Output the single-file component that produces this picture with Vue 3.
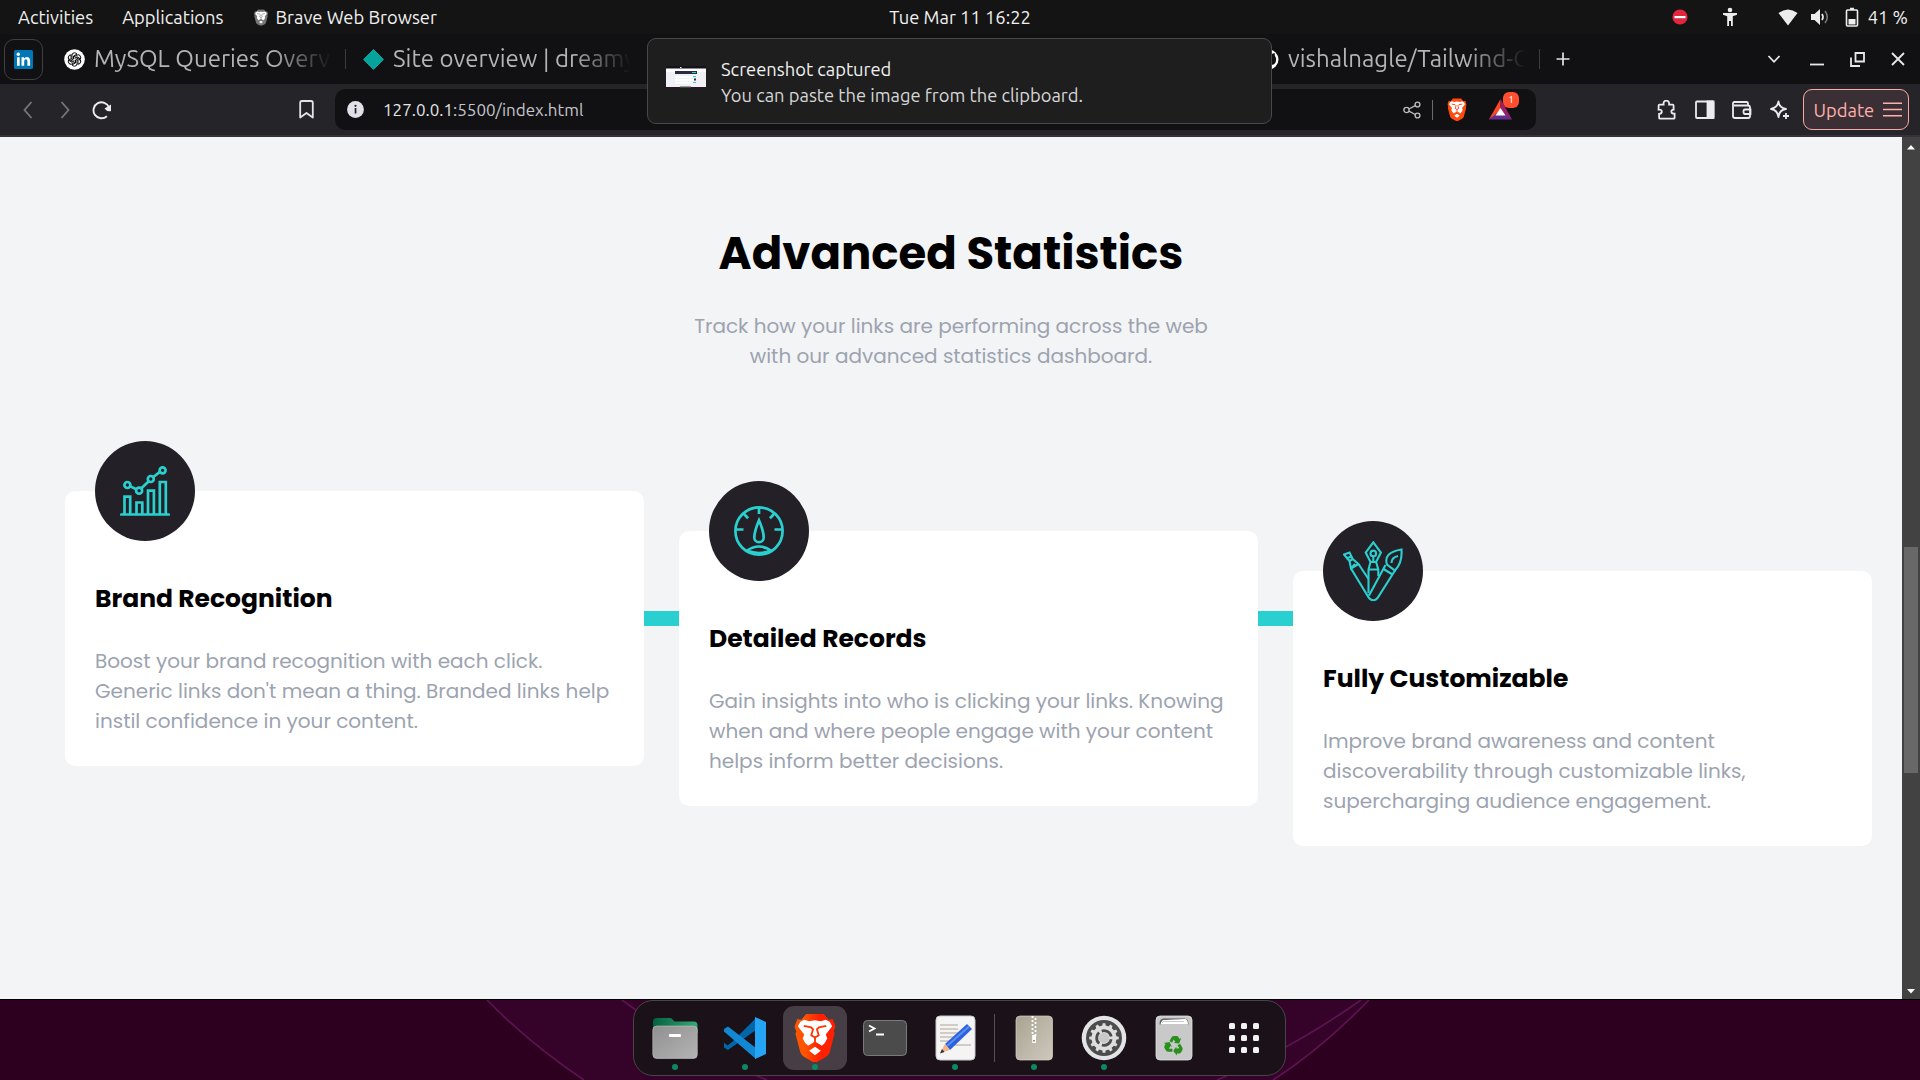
<script setup>
const cards = [
  {
    icon: 'chart',
    title: 'Brand Recognition',
    lines: [
      'Boost your brand recognition with each click.',
      "Generic links don't mean a thing. Branded links help",
      'instil confidence in your content.',
    ],
  },
  {
    icon: 'gauge',
    title: 'Detailed Records',
    lines: [
      'Gain insights into who is clicking your links. Knowing',
      'when and where people engage with your content',
      'helps inform better decisions.',
    ],
  },
  {
    icon: 'tools',
    title: 'Fully Customizable',
    lines: [
      'Improve brand awareness and content',
      'discoverability through customizable links,',
      'supercharging audience engagement.',
    ],
  },
]

const teeth = Array.from({ length: 12 }, (_, i) => i * 30)
</script>

<template>
  <div class="desktop">
    <svg width="0" height="0" class="defs">
      <defs>
        <linearGradient id="braveFill" x1="0" x2="1">
          <stop offset="0.25" stop-color="#ff5500" />
          <stop offset="0.6" stop-color="#ff2000" />
        </linearGradient>
        <symbol id="lion" viewBox="0 0 42 50">
          <path d="M12 1h18l5 6 4-1 3 8-2 5 1 2-5 19q-1 3-4 5l-9 5q-2 1-4 0l-9-5q-3-2-4-5L1 21l1-2-2-5 3-8 4 1z" />
          <path fill="#fff" d="M6 9l4-2 5 1.500 6-1 6 1 5-1.500 4 2 2.500 4.500L32 22l1.500 4-2.500 4.500-3 3-7-4.500-7 4.500-3-3L8.500 26l1.500-4-6.500-8.500zM21 34.500l6 4-6 4.500-6-4.500z" />
          <path fill="none" stroke="var(--cut, #ff3407)" stroke-width="1.900" d="M9.500 13.200l7.500 1.500 2 2-1.800 6 3.800 2.300 3.800-2.300-1.800-6 2-2 7.500-1.500M21 25v4.500" />
        </symbol>
      </defs>
    </svg>

    <header class="topbar">
      <div class="top-left">
        <span>Activities</span>
        <span class="applications">Applications</span>
        <svg class="mini-lion" width="14" height="17" viewBox="0 0 42 50"><use href="#lion" fill="#77777a" /></svg>
        <span>Brave Web Browser</span>
      </div>
      <div class="clock"><span>Tue Mar 11  16:22</span></div>
      <div class="top-right">
        <svg width="16" height="16" viewBox="0 0 16 16"><circle cx="8" cy="8" r="7.6" fill="#e2263d" /><rect x="2.5" y="7" width="11" height="2.2" fill="#fff" /></svg>
        <svg class="person" width="16" height="20" viewBox="0 0 16 20" fill="#ededed"><circle cx="8" cy="3" r="2.3" /><path d="M1 6h14v1.8l-4.2 1.4V19H9v-5H7v5H5.200V9.200L1 7.800z" /></svg>
        <svg class="wifi" width="20" height="17" viewBox="0 0 20 17" fill="#ededed"><path d="M.5 4Q10-3 19.500 4L10 16.500z" /></svg>
        <svg class="volume" width="20" height="18" viewBox="0 0 20 18"><path fill="#ededed" d="M1 6h3.500L10 1v16l-5.500-5H1z" /><path d="M12 6q2 3 0 6" fill="none" stroke="#ededed" stroke-width="1.700" /><path d="M15 3q4.500 6 0 12" fill="none" stroke="#777" stroke-width="1.600" /></svg>
        <svg class="battery" width="14" height="20" viewBox="0 0 14 20"><path d="M5 1.500h4M2.500 3h9q1 0 1 1v14q0 1-1 1h-9q-1 0-1-1V4q0-1 1-1z" fill="none" stroke="#ededed" stroke-width="1.600" /><rect x="3.500" y="12" width="7" height="5.500" fill="#ededed" /></svg>
        <span>41 %</span>
      </div>
    </header>

    <div class="tabs">
      <div class="pinned">
        <svg width="19" height="19" viewBox="0 0 19 19"><rect width="19" height="19" rx="1.500" fill="#0077b5" /><g fill="#fff"><circle cx="4.300" cy="4.300" r="1.700" /><path d="M3 7.200h2.700v8.500H3zM7.500 7.200h2.500v1.200q1-1.500 2.900-1.500 3.200 0 3.200 3.800v5h-2.700v-4.500q0-2-1.500-2-1.700 0-1.700 2v4.500H7.500z" /></g></svg>
      </div>
      <div class="tab first">
        <svg width="21" height="21" viewBox="0 0 21 21"><circle cx="10.500" cy="10.500" r="10.300" fill="#fff" /><g fill="none" stroke="#111" stroke-width="1"><path v-for="r in [0, 60, 120, 180, 240, 300]" :key="r" :transform="`rotate(${r} 10.500 10.500)`" d="M8 10V6.200q0-2.400 2.500-2.400 1.600 0 2.500 1.300L9.500 7v3" /></g></svg>
        <span class="tab-title">MySQL Queries Overv</span>
      </div>
      <i class="divider"></i>
      <div class="tab second">
        <svg width="21" height="21" viewBox="0 0 21 21"><path d="M10.500.5 20.500 10.500 10.500 20.500.5 10.500z" fill="#05a39c" stroke="#05a39c" stroke-linejoin="round" /></svg>
        <span class="tab-title">Site overview | dreamy</span>
      </div>
      <div class="tab third">
        <svg width="21" height="21" viewBox="0 0 21 21"><circle cx="10.500" cy="10.500" r="10" fill="#fff" /><path d="M8 20v-4q-5-1-4.500-6 0-2 1.200-3.200L4.600 4l3 1q3-.7 6 0l3-1 .3 3q1.100 1 1.100 3 .5 5-4.500 6v4z" fill="#111" /></svg>
        <span class="tab-title">vishalnagle/Tailwind-C</span>
      </div>
      <i class="divider"></i>
      <svg class="plus" width="14" height="14" viewBox="0 0 14 14" stroke="#e4e4e6" stroke-width="1.700"><path d="M7 .5v13M.5 7h13" /></svg>
      <div class="window-buttons">
        <svg width="14" height="14" viewBox="0 0 14 14"><path d="M1.500 4 7 9.800 12.500 4" /></svg>
        <svg width="14" height="14" viewBox="0 0 14 14"><path d="M0 12.500h14" /></svg>
        <svg width="15" height="15" viewBox="0 0 15 15"><path d="M5.500 1h8.500v8.500H5.500zM1 5.500V14h9" /></svg>
        <svg width="14" height="14" viewBox="0 0 14 14"><path d="M1 1 13 13M13 1 1 13" /></svg>
      </div>
    </div>

    <div class="toolbar">
      <svg class="back" width="10" height="18" viewBox="0 0 10 18"><path d="M8.500 1 1.500 9l7 8" /></svg>
      <svg class="forward" width="10" height="18" viewBox="0 0 10 18"><path d="M1.500 1l7 8-7 8" /></svg>
      <svg class="reload" width="20" height="20" viewBox="0 0 20 20"><path d="M14.900 16.200A8 8 0 1 1 17 7.500" fill="none" stroke="#ececee" stroke-width="1.900" /><path d="M12.500 8.500 19 4.500v6.500q-4 1-6.500-2.500z" fill="#ececee" /></svg>
      <svg class="bookmark" width="15" height="19" viewBox="0 0 15 19"><path d="M3 1h9q1.800 0 1.800 1.800V17.500L7.500 13l-6.300 4.500V2.800Q1.200 1 3 1z" fill="none" stroke="#e4e4e6" stroke-width="1.800" stroke-linejoin="round" /></svg>
      <div class="address">
        <svg width="17" height="17" viewBox="0 0 17 17"><circle cx="8.500" cy="8.500" r="8.400" fill="#e2e0e8" /><circle cx="8.500" cy="4.800" r="1.100" fill="#222" /><rect x="7.700" y="7" width="1.700" height="5.500" fill="#222" /></svg>
        <span class="url"><b>127.0.0.1</b>:5500/index.html</span>
        <svg class="share" width="18" height="18" viewBox="0 0 18 18" fill="none" stroke="#b9b9bf" stroke-width="1.400"><circle cx="3.500" cy="9" r="2.600" /><circle cx="14.500" cy="3.500" r="2.400" /><circle cx="14.500" cy="14.500" r="2.400" /><path d="M6 8 12.200 4.700M6 10.200l6.200 3.300" /></svg>
        <i class="address-divider"></i>
        <svg class="shield" width="20" height="23" viewBox="0 0 42 50"><use href="#lion" fill="#ff4a0c" /></svg>
        <div class="rewards">
          <svg width="23" height="21" viewBox="0 0 23 21"><path d="M11.500 0 0 20.500l11.500-7z" fill="#ff4724" /><path d="M11.500 0 23 20.500 11.500 13z" fill="#9e1f63" /><path d="M0 20.500h23L11.500 11z" fill="#662d91" /><path d="M11.500 9 6.500 16.500h10z" fill="#fff" /></svg>
          <span class="badge">1</span>
        </div>
      </div>
      <div class="actions">
        <svg width="20" height="20" viewBox="0 0 20 20"><path d="M3 5h4q-.5-4 2.700-4T12.500 5H16q1 0 1 1v4q-2.500.2-2.200 2.200T18 14v4q0 1-1 1H3.500q-1 0-1-1v-3.800q2.700 0 2.700-2.300T2 10V6q0-1 1-1z" transform="translate(-.4 -.3)" /></svg>
        <svg width="20" height="20" viewBox="0 0 20 20"><rect x="1" y="1.500" width="17.500" height="16.500" rx="1" /><path d="M12.500 1.500h6V18h-6z" fill="#ececee" /></svg>
        <svg width="20" height="20" viewBox="0 0 20 20"><path d="M16 5.500V3.500q0-1.500-1.500-1.500h-12Q1 2 1 3.500V16q0 2 2 2h13q2 0 2-2V7.500q0-2-2-2H2M18.500 9.500H13q-1.500 0-1.500 2.200T13 14h5.500z" /></svg>
        <svg width="20" height="20" viewBox="0 0 20 20"><path d="M8.500 1.500q.5 6 7.500 7.500-7 1-7.500 8-1-7-7.500-8 6.500-1.500 7.500-7.500z" stroke-linejoin="round" /><path d="M16 13v6M13 16h6" /></svg>
      </div>
      <div class="update">
        <span>Update</span>
        <svg width="19" height="15" viewBox="0 0 19 15"><path d="M0 1.200h19M0 7.500h19M0 13.800h19" stroke="#ffb0ac" stroke-width="1.500" /></svg>
      </div>
    </div>

    <div class="viewport">
      <main class="page">
        <h1>Advanced Statistics</h1>
        <p class="lead">
          <span>Track how your links are performing across the web</span>
          <span>with our advanced statistics dashboard.</span>
        </p>
        <section class="cards">
          <div class="connector"></div>
          <article v-for="card in cards" :key="card.icon" class="card" :class="card.icon">
            <div class="emblem">
              <svg v-if="card.icon === 'chart'" width="50" height="50" viewBox="0 0 50 50">
                <path d="M1.300 48.500h47.400M4.500 48V30.700h5.700V48M16.500 48V36.500h5.800V48M28 48V24.700h5.900V48M39.800 48V16h6v32" stroke-linecap="round" />
                <path d="M10.300 20.400 16.300 23.300M21.400 22.300 28.500 15.500M33.300 11 40 5.900" />
                <circle cx="7.400" cy="19" r="3" /><circle cx="19.100" cy="24.700" r="3" /><circle cx="30.800" cy="13" r="3" /><circle cx="42.600" cy="4.300" r="3" />
              </svg>
              <svg v-else-if="card.icon === 'gauge'" width="50" height="50" viewBox="0 0 50 50">
                <circle cx="25" cy="25" r="23.600" />
                <path d="M25 1v7M1 23.500h8.500M40.500 23.500H49M9.500 7.500l4.600 4.800M40.500 7.500l-4.600 4.800M13 44.500q12-8 24 0-12 5-24 0z" />
                <path d="M25 14.200q4.700 11 4.700 17.300a4.700 4.700 0 0 1-9.400 0Q20.300 25.500 25 14.200z" />
              </svg>
              <svg v-else class="wide" width="60" height="60" viewBox="0 0 60 60">
                <path d="M27.500 21 22.700 11.500 30.300 1.300 37.900 11.500 33.100 21zM30.300 15.500V21M27.500 21 25.500 28.500V52M33.100 21 35.300 28.500V35M25.500 28.500h9.800" />
                <circle cx="30.300" cy="12.400" r="2.800" />
                <path d="M1 13.500 6.500 11.500 9.700 18 15.500 23 8 27.500 6.500 20zM3 17.500 8.500 15.500M6.500 20l3.500-2M8 27.500 26 57q4.500 4.500 8.500 0L52 29.500M15.500 23 25.500 38M8 27.500l4-4.500M42.500 24 26 54.500M40.500 28l9 5.500" />
                <path d="M44 23.500Q40 11.500 58.500 8.500 59.500 22 52 29.500zM48.500 22q0-5.500 6.500-7" />
              </svg>
            </div>
            <h2>{{ card.title }}</h2>
            <p><span v-for="line in card.lines" :key="line">{{ line }}</span></p>
          </article>
        </section>
      </main>
      <div class="scrollbar">
        <svg width="8" height="5" viewBox="0 0 8 5"><path d="M4 0 8 4.500H0z" fill="#fff" /></svg>
        <div class="thumb"></div>
        <svg class="down" width="8" height="5" viewBox="0 0 8 5"><path d="M4 4.500 8 0H0z" fill="#fff" /></svg>
      </div>
    </div>

    <footer class="wallpaper">
      <svg class="lines" width="1920" height="80" viewBox="0 0 1920 80">
        <path d="M487 0Q530 44 584 80H1273Q1320 50 1369 0z" fill="#35022a" />
        <path d="M487 0Q530 44 584 80M622 0Q690 50 767 80M1217 80Q1290 50 1361 0M1273 80Q1320 50 1369 0" fill="none" stroke="#5c1450" stroke-width="1.700" />
      </svg>
      <nav class="dock">
        <div class="app"><svg width="46" height="46" viewBox="0 0 46 46">
          <defs><linearGradient id="folder" x1="0" y1="0" x2="1" y2="1"><stop stop-color="#909090" /><stop offset="1" stop-color="#b4b4b4" /></linearGradient><linearGradient id="back"><stop stop-color="#05603e" /><stop offset="1" stop-color="#35a878" /></linearGradient></defs>
          <path d="M1 14V7q0-4 4-4h13q2 0 3 2l1.500 1.500H42q3.500 0 3.500 3.500v8H1z" fill="url(#back)" /><rect x=".8" y="11" width="44.500" height="32.500" rx="4" fill="url(#folder)" stroke="#c4c4c4" stroke-width=".6" /><rect x="17" y="19" width="12" height="3" rx=".8" fill="#fff" /></svg><i></i></div>
        <div class="app"><svg width="44" height="44" viewBox="0 0 44 44">
          <path d="M33 1 9 25 4.500 28.500 1 25.500v5L5 33 33 13z" fill="#0065a9" transform="translate(0 1)" /><path d="M1 13 5 10.500 33 32v11L1 15.500z" fill="#1287d2" /><path d="M32 1 43 6v32l-11 5z" fill="#25a5f4" /></svg><i></i></div>
        <div class="app active"><svg width="42" height="49" viewBox="0 0 42 50"><use href="#lion" fill="url(#braveFill)" /></svg><i></i></div>
        <div class="app"><svg width="46" height="46" viewBox="0 0 46 46"><rect x="1.500" y="5.500" width="43" height="35" rx="4" fill="#4b4b4b" stroke="#7a7a7a" /><path d="M7 10.500l5.500 3L7 16.500M14 19.500h8" fill="none" stroke="#fff" stroke-width="1.800" /></svg></div>
        <div class="app"><svg width="46" height="46" viewBox="0 0 46 46"><rect x="4" y="1" width="39" height="44" rx="4" fill="#f4f4f4" stroke="#c9c9c9" /><path d="M8 10h18M8 14h18M8 18h18M8 22h15M8 26h12M15 30h24" stroke="#c5c0b4" stroke-width="1.600" /><path d="M13 29 35 9l5 5-22 21z" fill="#2d62dc" /><path d="M15 31 37 11.500" stroke="#5b8df5" stroke-width="2" /><path d="M13 29l5 6-10 3z" fill="#f4b483" /><path d="M10 34l2.500 3L8 38.500z" fill="#333" /></svg><i></i></div>
        <b class="separator"></b>
        <div class="app"><svg width="46" height="46" viewBox="0 0 46 46"><defs><linearGradient id="archive" x2="1" y2="1"><stop stop-color="#aaa392" /><stop offset="1" stop-color="#cdc9bd" /></linearGradient></defs><rect x="5" y="1" width="36.500" height="44" rx="4" fill="url(#archive)" stroke="#d8d4c8" stroke-width=".7" /><path d="M21.500 1v20M24.500 3v20" stroke="#fff" stroke-width="1.800" stroke-dasharray="2 2" /><path d="M21.200 20h3.800v8h-3.800z" fill="#fff" /><path d="M22.200 25h1.600v1.500h-1.600z" fill="#777" /></svg><i></i></div>
        <div class="app"><svg width="46" height="46" viewBox="0 0 46 46"><circle cx="23" cy="23" r="22.300" fill="#e4e4e4" /><circle cx="23" cy="23" r="18" fill="#4c4c4c" /><g fill="#dedede"><circle cx="23" cy="23" r="12.500" /><path v-for="t in teeth" :key="t" d="M22 11 22.300 9h1.400l.3 2z" stroke="#dedede" stroke-width="1.500" :transform="`rotate(${t} 23 23)`" /></g><circle cx="23" cy="23" r="7.300" fill="none" stroke="#4c4c4c" stroke-width="2.800" stroke-dasharray="12.300 3" transform="rotate(10 23 23)" /><circle cx="23" cy="23" r="5" fill="#c8c8c8" /></svg><i></i></div>
        <div class="app"><svg width="46" height="46" viewBox="0 0 46 46"><rect x="5" y="1" width="36" height="44" rx="4" fill="#c9c9c9" stroke="#e2e2e2" stroke-width=".8" /><path d="M8.500 9.500q0-6 4-6h21q4 0 4 6z" fill="#606060" /><path d="M9.500 9.500q1-5 4-4.500l21-1q2.500 1 2.500 5.500z" fill="#fff" /><path d="M11 8q1-2 4-1.500h18" fill="none" stroke="#bbb" stroke-width=".8" />
          <g v-for="r in [0, 120, 240]" :key="r" :transform="`rotate(${r} 23 30.500)`" fill="#2a8f1c"><path d="M18.500 26 20.800 22q.7-1 2.200-1h2.500q1.200 0 2 1.200l1 1.700 1.700-1-2 5.500-5.500-.4 1.600-1-1.600-2.600-1.700 3.300z" /></g></svg></div>
        <div class="app"><svg width="46" height="46" viewBox="0 0 46 46" fill="#f2f2f2"><g v-for="y in [8, 20, 32]" :key="y"><rect v-for="x in [8, 20, 32]" :key="x" :x="x" :y="y" width="6" height="6" rx="1.500" /></g></svg></div>
      </nav>
    </footer>

    <aside class="notification">
      <svg width="40" height="22" viewBox="0 0 40 22"><rect width="40" height="22" fill="#fff" /><rect width="40" height="2.500" fill="#16121c" /><rect x="14" y="1" width="1.500" height="1" fill="#fff" /><rect y="6" width="40" height="15" fill="#f0f1f4" /><rect x="9" y="5" width="22" height="3" fill="#2c2b46" /><rect x="26" y="6" width="4" height="1" fill="#2acfcf" /><path d="M9 10h18v2H9zM9 13h18v2H9zM9 16h18v1.500H9z" fill="#fff" /><path d="M27 10h3v1h-3zM27 16h3v1h-3z" fill="#2acfcf" /><rect x="28" y="12.500" width="2" height="2" fill="#2c2b46" /><rect y="21" width="40" height="1" fill="#30102c" /><rect x="14" y="20.500" width="11" height="1.500" fill="#444" /></svg>
      <div>
        <p>Screenshot captured</p>
        <p class="muted">You can paste the image from the clipboard.</p>
      </div>
    </aside>
  </div>
</template>

<style>
body { background: #111113; overflow: hidden; }
</style>

<style scoped>
* { box-sizing: border-box; }
svg { display: block; flex: none; }
.desktop { position: relative; width: 1920px; height: 1080px; overflow: hidden; display: flex; flex-direction: column; font-family: Ubuntu, "Noto Sans", sans-serif; font-size: 18.330px; color: #f0f0f0; background: #111113; }
.desktop span { white-space: pre; display: inline-block; }
.defs { position: absolute; }
h1, h2, p { margin: 0; }

.topbar { height: 34px; flex: none; display: grid; grid-template-columns: 1fr auto 1fr; align-items: center; background: #141414; line-height: 34px; }
.top-left, .top-right, .clock { display: flex; align-items: center; height: 34px; }
.top-left { padding-left: 18px; }
.applications { margin-left: 29px; }
.mini-lion { --cut: #77777a; margin: 0 7px 0 31px; }
.top-right { justify-content: flex-end; padding-right: 12px; }
.person { margin-left: 34px; }
.wifi { margin-left: 40px; }
.volume { margin-left: 12px; }
.battery { margin: 0 9px 0 15px; }

.tabs { height: 50px; flex: none; display: flex; align-items: center; background: #111113; }
.pinned { width: 39px; height: 41px; margin-left: 4px; border: 1px solid #404044; border-radius: 10px; display: flex; align-items: center; justify-content: center; }
.tab { display: flex; align-items: center; font-size: 24px; line-height: 50px; color: #b4b4b7; }
.tab-title { overflow: hidden; margin-left: 9px; width: 238px; -webkit-mask-image: linear-gradient(90deg, #000 75%, transparent 100%); mask-image: linear-gradient(90deg, #000 75%, transparent 100%); }
.first { margin-left: 21px; }
.second { margin-left: 17px; }
.third { margin-left: 627px; }
.divider { width: 1px; height: 20px; background: #3c3c40; margin-left: 13px; }
.plus { margin-left: 16px; }
.window-buttons { display: flex; align-items: center; gap: 26px; margin-left: auto; padding-right: 15px; fill: none; stroke: #e8e8ea; stroke-width: 1.8; }
.window-buttons svg:first-child { margin-right: 3px; }

.toolbar { height: 53px; flex: none; display: flex; align-items: center; background: #252429; border-bottom: 2px solid #37313a; }
.back, .forward { fill: none; stroke: #77767c; stroke-width: 1.8; }
.back { margin-left: 23px; }
.forward { margin-left: 27px; }
.reload { margin-left: 22px; }
.bookmark { margin-left: 187px; }
.address { margin-left: 21px; width: 1201px; height: 41px; flex: none; border-radius: 10px; background: #111114; display: flex; align-items: center; padding-left: 12px; }
.url { margin-left: 19px; width: 207px; font-size: 17px; line-height: 40px; color: #c5c5c9; }
.url b { font-weight: 400; color: #e4e4e6; }
.share { margin-left: 813px; }
.address-divider { width: 1px; height: 20px; background: #6a6a70; margin-left: 11px; }
.shield { margin-left: 14px; }
.rewards { position: relative; margin-left: 22px; }
.badge { position: absolute; left: 14px; top: -7px; width: 16px; height: 16px; border-radius: 6px; background: #ff4f2e; color: #fff; font-size: 10px; line-height: 16px; text-align: center; }
.actions { display: flex; margin-left: 121px; gap: 17.500px; fill: none; stroke: #ececee; stroke-width: 1.8; }
.update { width: 106px; height: 41px; flex: none; margin-left: 13px; border: 1px solid #f5aaa7; border-radius: 9px; background: #3a2f34; color: #ffb0ac; display: flex; align-items: center; justify-content: space-between; padding: 0 6px 0 10px; line-height: 40px; }

.viewport { height: 862px; flex: none; display: flex; }
.page { width: 1902px; background: #f3f4f6; padding: 92px 30px 0 65px; font-family: Poppins, Inter, sans-serif; }
h1 { text-align: center; margin-right: 35px; font-size: 45px; line-height: 50px; font-weight: 700; color: #000; }
.lead { margin: 32px 35px 0 0; text-align: center; font-size: 20px; line-height: 30px; color: #9ca3af; display: flex; flex-direction: column; align-items: center; }
.cards { position: relative; margin-top: 120px; width: 1807px; display: flex; align-items: flex-start; gap: 35px; }
.connector { position: absolute; left: 30px; right: 30px; top: 120px; height: 15px; background: #2acfcf; }
.card { position: relative; width: 579px; height: 275px; border-radius: 10px; background: #fff; padding: 90px 30px 0; }
.gauge { margin-top: 40px; }
.tools { margin-top: 80px; }
.emblem { position: absolute; left: 30px; top: -50px; width: 100px; height: 100px; border-radius: 50%; background: #232127; display: flex; align-items: center; justify-content: center; fill: none; stroke: #2acfcf; stroke-width: 2.7; }
.wide { stroke-width: 2.1; }
h2 { font-size: 25px; line-height: 35px; font-weight: 700; color: #000; }
.card p { margin-top: 30px; font-size: 20px; line-height: 30px; color: #9ca3af; display: flex; flex-direction: column; align-items: flex-start; }

.scrollbar { width: 18px; background: #424242; display: flex; flex-direction: column; align-items: center; padding-top: 8px; }
.thumb { width: 14px; height: 226px; margin-top: 397px; background: #686868; }
.down { margin-top: auto; margin-bottom: 5px; }

.wallpaper { position: relative; height: 81px; flex: none; border-top: 1px solid #000; background: #2c001e; display: flex; justify-content: center; }
.lines { position: absolute; left: 0; top: 0; }
.dock { position: relative; width: 653px; height: 76px; margin-right: 1px; border: 1px solid #4a4548; border-radius: 20px; background: rgba(27, 18, 24, 0.97); display: flex; align-items: center; padding: 0 0 1px 9px; }
.app { position: relative; width: 64px; height: 64px; margin-right: 6px; flex: none; border-radius: 11px; display: flex; align-items: center; justify-content: center; }
.active { background: #473d44; }
.app i { position: absolute; left: 29px; bottom: 0; width: 6px; height: 6px; border-radius: 50%; background: #0b8a60; }
.separator { width: 1px; height: 48px; background: #575155; margin: 0 7px 0 1px; }

.notification { position: absolute; left: 647px; top: 38px; width: 625px; height: 86px; border: 1px solid #484848; border-radius: 9px; background: #1e1e1e; display: flex; padding: 17px 0 0 18px; line-height: 26px; }
.notification svg { margin: 10px 15px 0 0; }
.muted { color: #d6d6d6; }
</style>
